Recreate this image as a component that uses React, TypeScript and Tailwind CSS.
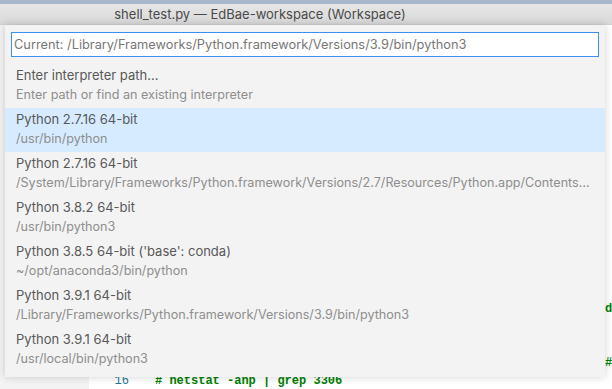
import React from "react";

const items = [
  { label: "Python 2.7.16 64-bit", desc: "/usr/bin/python", active: true },
  {
    label: "Python 2.7.16 64-bit",
    desc: "/System/Library/Frameworks/Python.framework/Versions/2.7/Resources/Python.app/Contents/MacOS/Python",
  },
  { label: "Python 3.8.2 64-bit", desc: "/usr/bin/python3" },
  { label: "Python 3.8.5 64-bit ('base': conda)", desc: "~/opt/anaconda3/bin/python" },
  { label: "Python 3.9.1 64-bit", desc: "/Library/Frameworks/Python.framework/Versions/3.9/bin/python3" },
  { label: "Python 3.9.1 64-bit", desc: "/usr/local/bin/python3" },
];

// Only the parts of the editor lines that peek out from behind the picker.
const edge: { n: number; ch: string }[] = [
  { n: 11, ch: "" },
  { n: 12, ch: "d" },
  { n: 13, ch: "" },
  { n: 14, ch: "" },
  { n: 15, ch: "#" },
];

function Row({ label, desc, active }: { label: string; desc: string; active?: boolean }) {
  return (
    <div className={`h-[44px] pl-[11px] pr-[12px] pt-[2px] flex flex-col gap-[2px] ${active ? "bg-[#d6ebff]" : ""}`}>
      <div className="text-[13px] leading-[18px] text-[#585858] whitespace-nowrap">{label}</div>
      <div className="text-[12.6px] leading-[18px] text-[#8e8e8e] truncate">{desc}</div>
    </div>
  );
}

export default function App() {
  return (
    <div className="relative w-[612px] h-[389px] overflow-hidden bg-[#ececec] font-['Inter',sans-serif]">
      <div className="h-[4px] bg-[#a8b7cc]" />
      <div className="h-[21px] bg-gradient-to-b from-[#e6e6e6] to-[#d9d9d9] flex items-center justify-center pr-[92px] pt-[1px] text-[13px] text-[#4a4a4a] border-b border-[#d2d2d2]">
        shell_test.py — EdBae-workspace (Workspace)
      </div>
      {/* editor behind */}
      <div className="flex h-[364px]">
        <div className="w-[89px] bg-[#f3f3f3]" />
        <div className="flex-1 bg-white flex flex-col justify-end overflow-hidden font-['Liberation_Mono',monospace] text-[12px] leading-[18px] -mb-[1px]">
          {edge.map((l) => (
            <div key={l.n} className="h-[18px] pl-[516px] text-[#008000] font-bold whitespace-pre">
              {l.ch}
            </div>
          ))}
          <div className="flex whitespace-pre">
            <span className="w-[40px] text-right text-[#237893]">16</span>
            <span className="pl-[26px] text-[#008000] font-bold"># netstat -anp | grep 3306</span>
          </div>
        </div>
      </div>

      {/* quick pick overlay */}
      <div className="absolute left-[5px] top-[25px] w-[600px] bg-[#f3f3f3] shadow-[0_0_8px_rgba(0,0,0,0.18)] pt-[7px] pb-[5px]">
        <div className="px-[6px]">
          <div className="h-[25px] bg-white border-[1.5px] border-[#3d8ff0] flex items-center px-[2px] text-[12.8px] text-[#777777] whitespace-nowrap overflow-hidden">
            Current: /Library/Frameworks/Python.framework/Versions/3.9/bin/python3
          </div>
        </div>
        <div className="mt-[7px]">
          <Row label="Enter interpreter path..." desc="Enter path or find an existing interpreter" />
          {items.map((it, i) => (
            <Row key={i} label={it.label} desc={it.desc} active={it.active} />
          ))}
        </div>
      </div>
    </div>
  );
}
